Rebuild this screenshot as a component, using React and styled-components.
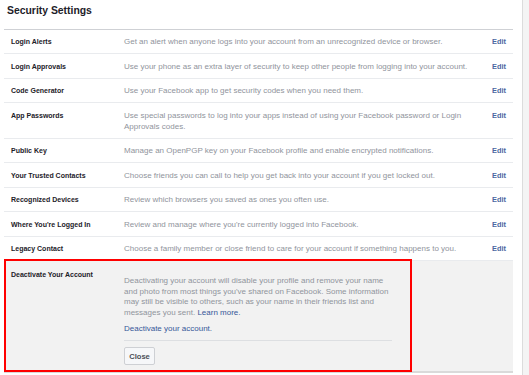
import React from "react";
import styled, { createGlobalStyle } from "styled-components";

const Global = createGlobalStyle`
  html, body { margin: 0; padding: 0; background: #fff; }
  body { font-family: "Liberation Sans", Arial, sans-serif; -webkit-font-smoothing: antialiased; }
`;

const Page = styled.div`
  display: flex;
  width: 529px;
  height: 375px;
  overflow: hidden;
`;

const Panel = styled.div`
  width: 509px;
  margin-left: 4px;
`;

const Gutter = styled.div`
  margin-left: auto;
  width: 6px;
  border-left: 1px solid #dcdcdc;
  background: #f4f4f4;
`;

const Title = styled.h2`
  margin: 0;
  padding: 4px 0 11px 3px;
  font-size: 10.4px;
  line-height: 14px;
  font-weight: bold;
  color: #1d2129;
  border-bottom: 1px solid #cfd1d5;
`;

const Row = styled.div`
  display: grid;
  grid-template-columns: 120px 1fr 33px;
  align-items: start;
  padding: 6.2px 0 6.3px;
  border-bottom: 1px solid #e9ebee;
  line-height: 11px;
`;

const Label = styled.div`
  padding-left: 7px;
  font-size: 7px;
  font-weight: bold;
  color: #1d2129;
  white-space: nowrap;
`;

const Desc = styled.div`
  font-size: 8px;
  color: #90949c;
  padding-right: 6px;
`;

const Edit = styled.a`
  font-size: 7.4px;
  font-weight: bold;
  color: #4b67a1;
  text-align: right;
  padding-right: 7px;
`;

const Deactivate = styled.div`
  position: relative;
  display: grid;
  grid-template-columns: 120px 268px;
  background: #f2f2f2;
  border-bottom: 2px solid #dadada;
  height: 112px;
  box-sizing: border-box;
`;

const DLabel = styled(Label)`
  padding-top: 8px;
  line-height: 11px;
`;

const DContent = styled.div`
  padding-top: 15px;
  display: flex;
  flex-direction: column;
`;

const DText = styled.p`
  margin: 0;
  font-size: 8px;
  line-height: 10.5px;
  color: #90949c;
`;

const Link = styled.a`
  color: #365899;
  font-weight: normal;
`;

const DLink = styled.a`
  margin-top: 5px;
  font-size: 8px;
  line-height: 11px;
  color: #365899;
`;

const Sep = styled.div`
  margin-top: 6px;
  border-top: 1px solid #dddfe2;
`;

const CloseBtn = styled.button`
  margin-top: 6px;
  align-self: flex-start;
  width: 31px;
  height: 18px;
  padding: 0;
  font-family: inherit;
  font-size: 7.6px;
  font-weight: bold;
  color: #4b4f56;
  background: #f6f7f9;
  border: 1px solid #ced0d4;
  border-radius: 2px;
`;

const Highlight = styled.div`
  position: absolute;
  left: 0;
  top: -2px;
  width: 408px;
  height: 113px;
  border: 2px solid #ff0000;
  box-sizing: border-box;
  pointer-events: none;
`;

const rows = [
  ["Login Alerts", "Get an alert when anyone logs into your account from an unrecognized device or browser."],
  ["Login Approvals", "Use your phone as an extra layer of security to keep other people from logging into your account."],
  ["Code Generator", "Use your Facebook app to get security codes when you need them."],
  ["App Passwords", "Use special passwords to log into your apps instead of using your Facebook password or Login Approvals codes."],
  ["Public Key", "Manage an OpenPGP key on your Facebook profile and enable encrypted notifications."],
  ["Your Trusted Contacts", "Choose friends you can call to help you get back into your account if you get locked out."],
  ["Recognized Devices", "Review which browsers you saved as ones you often use."],
  ["Where You're Logged In", "Review and manage where you're currently logged into Facebook."],
  ["Legacy Contact", "Choose a family member or close friend to care for your account if something happens to you."],
];

export default function App() {
  return (
    <>
      <Global />
      <Page>
        <Panel>
          <Title>Security Settings</Title>
          {rows.map(([l, d]) => (
            <Row key={l}>
              <Label>{l}</Label>
              <Desc>{d}</Desc>
              <Edit>Edit</Edit>
            </Row>
          ))}
          <Deactivate>
            <DLabel>Deactivate Your Account</DLabel>
            <DContent>
              <DText>
                Deactivating your account will disable your profile and remove your name and photo from most things you've shared on Facebook. Some information may still be visible to others, such as your name in their friends list and messages you sent. <Link>Learn more.</Link>
              </DText>
              <DLink>Deactivate your account.</DLink>
              <Sep />
              <CloseBtn>Close</CloseBtn>
            </DContent>
            <Highlight />
          </Deactivate>
        </Panel>
        <Gutter />
      </Page>
    </>
  );
}
